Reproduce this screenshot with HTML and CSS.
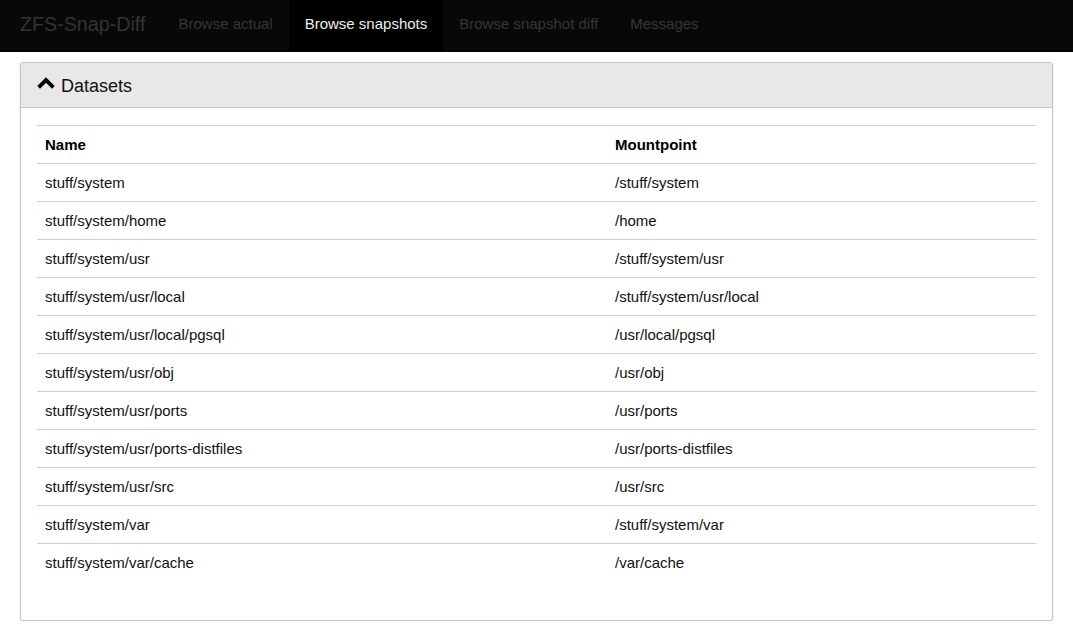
FILE: index.html
```html
<!DOCTYPE html>
<html>
<head>
<meta charset="utf-8">
<title>ZFS-Snap-Diff</title>
<link rel="stylesheet" href="styles.css">
</head>
<body>
<nav class="navbar">
  <a class="brand" href="#">ZFS-Snap-Diff</a>
  <ul class="nav">
    <li><a href="#">Browse actual</a></li>
    <li class="active"><a href="#">Browse snapshots</a></li>
    <li><a href="#">Browse snapshot diff</a></li>
    <li><a href="#">Messages</a></li>
  </ul>
</nav>
<main class="content">
  <section class="panel">
    <div class="panel-heading">
      <svg class="chevron" width="18" height="13" viewBox="0 0 18 13" aria-hidden="true">
        <path d="M0.3 9.0 L9 0.3 L17.7 9.0 L15 11.7 L9 5.7 L3 11.7 Z" fill="#000"/>
      </svg>
      <span class="panel-title">Datasets</span>
    </div>
    <div class="panel-body">
      <table class="table">
        <thead>
          <tr><th class="col-name">Name</th><th>Mountpoint</th></tr>
        </thead>
        <tbody>
          <tr><td>stuff/system</td><td>/stuff/system</td></tr>
          <tr><td>stuff/system/home</td><td>/home</td></tr>
          <tr><td>stuff/system/usr</td><td>/stuff/system/usr</td></tr>
          <tr><td>stuff/system/usr/local</td><td>/stuff/system/usr/local</td></tr>
          <tr><td>stuff/system/usr/local/pgsql</td><td>/usr/local/pgsql</td></tr>
          <tr><td>stuff/system/usr/obj</td><td>/usr/obj</td></tr>
          <tr><td>stuff/system/usr/ports</td><td>/usr/ports</td></tr>
          <tr><td>stuff/system/usr/ports-distfiles</td><td>/usr/ports-distfiles</td></tr>
          <tr><td>stuff/system/usr/src</td><td>/usr/src</td></tr>
          <tr><td>stuff/system/var</td><td>/stuff/system/var</td></tr>
          <tr><td>stuff/system/var/cache</td><td>/var/cache</td></tr>
        </tbody>
      </table>
    </div>
  </section>
</main>
</body>
</html>
```

FILE: styles.css
```css
* { box-sizing: border-box; }

html, body {
  margin: 0;
  padding: 0;
  background: #fff;
  font-family: "Liberation Sans", Arial, sans-serif;
  font-size: 15px;
  line-height: 21px;
  color: #222;
}

.navbar {
  display: flex;
  align-items: stretch;
  height: 52px;
  background: #080808;
  border-bottom: 1px solid #000;
}

.brand {
  display: block;
  padding: 13px 15px 0 20px;
  font-size: 19.7px;
  line-height: 22px;
  color: #333;
  text-decoration: none;
}

.nav {
  display: flex;
  list-style: none;
  margin: 0 0 0 2px;
  padding: 0;
}

.nav li a {
  display: block;
  height: 51px;
  padding: 14px 16px 0 16px;
  color: #363636;
  text-decoration: none;
  line-height: 20px;
}

.nav li.active a {
  background: #000;
  color: #eee;
}

.content {
  padding: 10px 20px 0 20px;
}

.panel {
  border: 1px solid #c4c4c4;
  border-radius: 3px;
  background: #fff;
  box-shadow: 0 1px 2px rgba(0, 0, 0, 0.15);
}

.panel-heading {
  display: flex;
  align-items: center;
  height: 45px;
  padding: 2px 15px 0 16px;
  background: #e8e8e8;
  border-bottom: 1px solid #c4c4c4;
  border-radius: 3px 3px 0 0;
}

.chevron {
  margin-right: 6px;
  margin-top: -5px;
}

.panel-title {
  font-size: 18px;
  color: #111;
}

.panel-body {
  padding: 17px 16px 39px 16px;
}

.table {
  width: 100%;
  border-collapse: collapse;
}

.table th,
.table td {
  padding: 8px 8px 8px 8px;
  border-top: 1px solid #cfcfcf;
  text-align: left;
  vertical-align: top;
  line-height: 21px;
  color: #111;
}

.table th {
  font-weight: bold;
  color: #000;
}

.col-name {
  width: 570px;
}
```
